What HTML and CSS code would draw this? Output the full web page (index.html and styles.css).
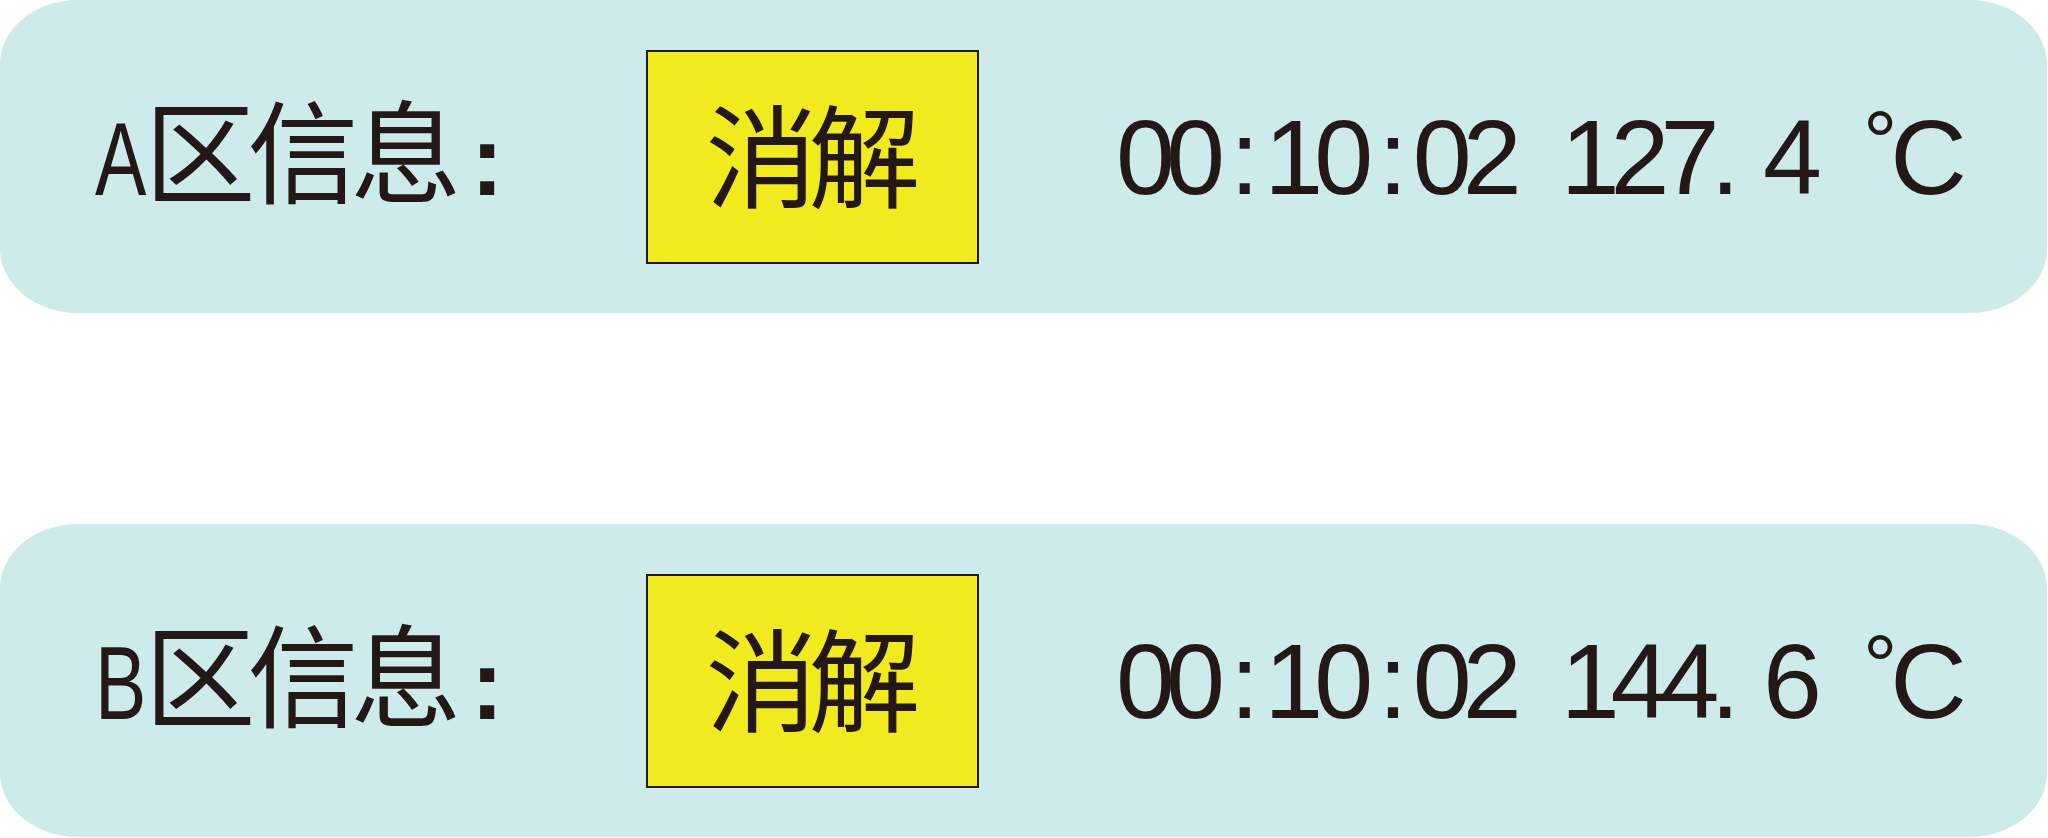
FILE: index.html
```html
<!DOCTYPE html>
<html lang="zh-CN">

<head>
    <meta charset="UTF-8">
    <meta name="viewport" content="width=device-width, initial-scale=1.0">
    <title>消解状态</title>
    <link rel="stylesheet" href="styles.css">
</head>

<body>
    <div class="zones">
        <div class="zone">
            <div class="zone-label"><span class="zone-code">A</span>区信息<span class="colon">:</span></div>
            <div class="zone-state">消解</div>
            <div class="zone-reading">
                <span class="time">00<span class="sep">:</span>10<span class="sep">:</span>02</span>
                <span class="temp">127<span class="dot">.</span>4</span>
                <span class="unit"><span class="deg">°</span>C</span>
            </div>
        </div>
        <div class="zone">
            <div class="zone-label"><span class="zone-code">B</span>区信息<span class="colon">:</span></div>
            <div class="zone-state">消解</div>
            <div class="zone-reading">
                <span class="time">00<span class="sep">:</span>10<span class="sep">:</span>02</span>
                <span class="temp">144<span class="dot">.</span>6</span>
                <span class="unit"><span class="deg">°</span>C</span>
            </div>
        </div>
    </div>
</body>

</html>
```

FILE: styles.css
```css
body {
    margin: 0;
    background-color: #fff;
    color: #231815;
}

.zones {
    display: flex;
    flex-direction: column;
    gap: 211px;
    width: 2047px;
}

.zone {
    display: flex;
    align-items: center;
    height: 313px;
    background-color: #cdebea;
    border-radius: 78px / 64px;
}

.zone-label {
    flex: 0 0 646px;
    box-sizing: border-box;
    padding: 0 0 11px 95px;
    font-family: "Noto Sans CJK SC", sans-serif;
    font-size: 111px;
    line-height: 1;
    letter-spacing: -8px;
}

.zone-code {
    display: inline-block;
    margin-right: -20px;
    font-family: "Liberation Sans", sans-serif;
    font-size: 104px;
    letter-spacing: 0;
    transform: scaleX(0.74);
    transform-origin: 0 0;
}

.colon {
    margin-left: 17px;
    font-family: "Liberation Sans", sans-serif;
    font-weight: bold;
    font-size: 100px;
    letter-spacing: 0;
}

.zone-state {
    flex: 0 0 333px;
    height: 214px;
    box-sizing: border-box;
    display: flex;
    align-items: center;
    justify-content: center;
    padding: 0 8px 12px 0;
    border: 2px solid #231815;
    background-color: #f1ea1f;
    font-family: "Noto Sans CJK SC", sans-serif;
    font-size: 112px;
    line-height: 1;
    letter-spacing: -9px;
}

.zone-reading {
    display: flex;
    align-items: baseline;
    gap: 48px;
    margin-left: 137px;
    font-family: "Liberation Sans", Arial, sans-serif;
    font-size: 106px;
    line-height: 1;
    letter-spacing: -9px;
}

.sep {
    margin: 0 14px;
}

.dot {
    margin-right: 32px;
}

.unit {
    margin-left: 2px;
}

.deg {
    font-size: 86px;
    line-height: 0;
    letter-spacing: -7px;
    vertical-align: 23px;
}
```
